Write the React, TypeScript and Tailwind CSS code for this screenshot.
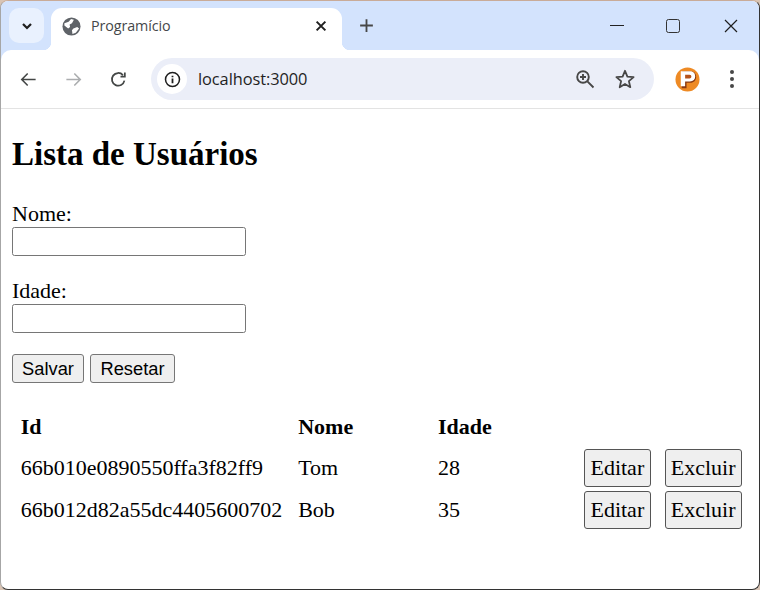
import React from "react";

const Ico = ({ className, children, vb = "0 0 24 24" }: { className?: string; children: React.ReactNode; vb?: string }) => (
  <svg viewBox={vb} className={className} fill="none" stroke="currentColor" strokeWidth="2">{children}</svg>
);

const Globe = () => (
  <svg viewBox="0 0 20 20" className="w-[19px] h-[19px] text-[#5f6368]">
    <circle cx="10" cy="10" r="9.5" fill="currentColor" />
    <path d="M2.5 6.5 L7 5 L9.5 2 L12.5 3 L10.5 6.5 L8 8 L8.5 10.5 L6.5 12 L2.5 9 Z M12 12 L16 10.5 L18 12 L14.5 16.5 L11 18 L10.5 14 Z" fill="#fff" />
  </svg>
);

const NavBtn = ({ children, className }: { children: React.ReactNode; className: string }) => (
  <div className={`flex items-center justify-center ${className}`}>{children}</div>
);

const Tr = ({ id, nome, idade }: { id: string; nome: string; idade: string }) => (
  <tr>
    <td className="pl-[6.67px] py-[1px]">{id}</td>
    <td className="pl-[6.67px] py-[1px]">{nome}</td>
    <td className="pl-[6.67px] py-[1px]">{idade}</td>
    <td className="p-0 py-[1px]">
      <div className="flex justify-end pr-[8.67px]">
        <button className="h-[38px] w-[67px] bg-[#efefef] border border-[#555] rounded-[3px] text-[22px] font-['Liberation_Serif',serif]">Editar</button>
      </div>
    </td>
    <td className="p-0 py-[1px]">
      <div className="flex justify-end pr-[4.33px]">
        <button className="h-[38px] w-[77px] bg-[#efefef] border border-[#555] rounded-[3px] text-[22px] font-['Liberation_Serif',serif]">Excluir</button>
      </div>
    </td>
  </tr>
);

export default function App() {
  return (
    <div className="w-[760px] h-[590px] bg-[#d9c4b4] overflow-hidden">
      <div className="w-[760px] h-[590px] flex flex-col rounded-[8px] overflow-hidden border-t border-t-[#c9ab98] border-l border-l-[#a6a6a6] border-r border-r-[#333] border-b border-b-[#333] bg-white">
        {/* Tab strip */}
        <div className="h-[49px] shrink-0 bg-[#d3e3fd] flex items-start relative">
          <div className="mt-[7px] ml-[8px] w-[35px] h-[35px] rounded-[10px] bg-[#e9f1fe] flex items-center justify-center text-[#1f1f1f]">
            <Ico className="w-[16px] h-[16px]" vb="0 0 24 24"><path d="M6 9 L12 15 L18 9" strokeWidth="3.4" /></Ico>
          </div>
          <div className="relative mt-[7px] ml-[7px] w-[291px] h-[42px] bg-white rounded-t-[11px] flex items-center pl-[11px] pb-[6px] z-10">
            <div className="absolute -left-[8px] bottom-0 w-[8px] h-[8px] bg-[radial-gradient(circle_at_0_0,#d3e3fd_8px,#fff_8.5px)]" />
            <div className="absolute -right-[8px] bottom-0 w-[8px] h-[8px] bg-[radial-gradient(circle_at_100%_0,#d3e3fd_8px,#fff_8.5px)]" />
            <Globe />
            <span className="ml-[10px] text-[14.3px] text-[#45474a] font-['Open_Sans',sans-serif] tracking-[-0.1px]">Programício</span>
            <div className="ml-auto mr-[14px] text-[#1f1f1f]">
              <Ico className="w-[14px] h-[14px]"><path d="M4.5 4.5 L19.5 19.5 M19.5 4.5 L4.5 19.5" strokeWidth="3.4" /></Ico>
            </div>
          </div>
          <div className="ml-[16px] mt-[16px] text-[#474747]">
            <Ico className="w-[17px] h-[17px]"><path d="M12 3 V21 M3 12 H21" strokeWidth="2.6" /></Ico>
          </div>
          <div className="ml-auto flex items-start text-[#1f1f1f]">
            <div className="w-[14px] mt-[24px] border-t-[1.5px] border-[#222] mr-[42px]" />
            <div className="w-[14px] h-[14px] mt-[18px] rounded-[2.5px] border-[1.5px] border-[#333] mr-[43px]" />
            <Ico className="w-[16px] h-[16px] mt-[17px] mr-[20px]" vb="0 0 16 16"><path d="M2 2 L14 14 M14 2 L2 14" strokeWidth="1.2" /></Ico>
          </div>
        </div>
        {/* Toolbar */}
        <div className="h-[59px] shrink-0 bg-[#d3e3fd]">
          <div className="h-[59px] bg-white rounded-t-[10px] border-b border-[#e3e3e3] flex items-center">
            <NavBtn className="w-[20px] ml-[17px] text-[#444746]">
              <Ico className="w-[19px] h-[19px]"><path d="M21 12 H4 M11 4.5 L3.5 12 L11 19.5" /></Ico>
            </NavBtn>
            <NavBtn className="w-[20px] ml-[25px] text-[#abadaf]">
              <Ico className="w-[19px] h-[19px]"><path d="M3 12 H20 M13 4.5 L20.5 12 L13 19.5" /></Ico>
            </NavBtn>
            <NavBtn className="w-[20px] ml-[25px] text-[#444746]">
              <Ico className="w-[19px] h-[19px]"><path d="M19.5 13.5 A8 8 0 1 1 17.6 6.4 M20 3 V8.5 H14.5" strokeWidth="2.2" /></Ico>
            </NavBtn>
            <div className="ml-[23px] w-[503px] h-[42px] rounded-full bg-[#ebeef8] flex items-center pl-[6px] pr-[19px]">
              <div className="w-[30px] h-[30px] rounded-full bg-white flex items-center justify-center text-[#1f1f1f]">
                <svg viewBox="0 0 18 18" className="w-[17px] h-[17px]" fill="none" stroke="currentColor" strokeWidth="1.6">
                  <circle cx="9" cy="9" r="7.4" />
                  <path d="M9 8 V13 M9 5 V6.6" strokeWidth="1.9" />
                </svg>
              </div>
              <span className="ml-[11px] text-[16.4px] text-[#1f1f1f] font-['Open_Sans',sans-serif] tracking-[-0.08px]">localhost:3000</span>
              <div className="ml-auto text-[#474747]">
                <svg viewBox="0 0 20 20" className="w-[20px] h-[20px]" fill="none" stroke="currentColor" strokeWidth="1.9">
                  <circle cx="8" cy="8" r="5.8" />
                  <path d="M12.4 12.4 L18.5 18.5 M8 5 V11 M5 8 H11" />
                </svg>
              </div>
              <div className="ml-[20px] text-[#474747]">
                <svg viewBox="0 0 20 20" className="w-[20px] h-[20px]" fill="none" stroke="currentColor" strokeWidth="1.8" strokeLinejoin="round">
                  <path d="M10 1.8 L12.4 7.6 L18.6 8.1 L13.9 12.1 L15.3 18.2 L10 15 L4.7 18.2 L6.1 12.1 L1.4 8.1 L7.6 7.6 Z" />
                </svg>
              </div>
            </div>
            <div className="ml-[21px]">
              <svg viewBox="0 0 26 26" className="w-[25px] h-[25px] block">
                <circle cx="13" cy="13" r="12.5" fill="#ee8a24" />
                <path d="M7 22 V6 C7 5 8 4.5 9 4.5 H16 C20.5 4.5 22 7.5 22 10.5 C22 14 19.5 16.5 16 16.5 H12 V22 Z" fill="#8a3a12" />
                <path d="M6 20 V4.5 H15.5 C19.5 4.5 21 7 21 10 C21 13 19 15 15.5 15 H10.5 V20 Z" fill="#fff" />
                <path d="M10.5 8 H15 C16.5 8 17 9 17 10 C17 11 16.5 12 15 12 H10.5 Z" fill="#b5521a" />
              </svg>
            </div>
            <div className="ml-[30px] flex flex-col gap-[3px]">
              <div className="w-[4px] h-[4px] rounded-full bg-[#474747]" />
              <div className="w-[4px] h-[4px] rounded-full bg-[#474747]" />
              <div className="w-[4px] h-[4px] rounded-full bg-[#474747]" />
            </div>
          </div>
        </div>
        {/* Page */}
        <div className="flex-1 px-[11px] font-['Liberation_Serif',serif] text-[22px] text-black">
          <h2 className="mt-[27px] text-[33px] font-bold leading-[37px]">Lista de Usuários</h2>
          <label className="block mt-[26.5px] leading-[27px]">Nome:</label>
          <input className="block w-[234px] h-[29px] bg-white border border-[#767676] rounded-[2.5px]" />
          <label className="block mt-[21px] leading-[27px]">Idade:</label>
          <input className="block w-[234px] h-[29px] bg-white border border-[#767676] rounded-[2.5px]" />
          <div className="flex gap-[6px] mt-[21px]">
            <button className="h-[29px] w-[72px] bg-[#efefef] border border-[#767676] rounded-[3px] text-[18.3px] font-['Liberation_Sans',sans-serif]">Salvar</button>
            <button className="h-[29px] w-[85px] bg-[#efefef] border border-[#767676] rounded-[3px] text-[18.3px] font-['Liberation_Sans',sans-serif]">Resetar</button>
          </div>
          <table className="mt-[20px] w-[736px] table-fixed border-separate border-spacing-[2.67px]">
            <colgroup>
              <col className="w-[274px]" />
              <col className="w-[137px]" />
              <col className="w-[130px]" />
              <col className="w-[95px]" />
              <col className="w-[84px]" />
            </colgroup>
            <thead>
              <tr className="font-bold">
                <th className="pl-[6.67px] pt-[5px] pb-[3px] text-left">Id</th>
                <th className="pl-[6.67px] pt-[5px] pb-[3px] text-left">Nome</th>
                <th className="pl-[6.67px] pt-[5px] pb-[3px] text-left">Idade</th>
                <th />
                <th />
              </tr>
            </thead>
            <tbody>
              <Tr id="66b010e0890550ffa3f82ff9" nome="Tom" idade="28" />
              <Tr id="66b012d82a55dc4405600702" nome="Bob" idade="35" />
            </tbody>
          </table>
        </div>
      </div>
    </div>
  );
}
